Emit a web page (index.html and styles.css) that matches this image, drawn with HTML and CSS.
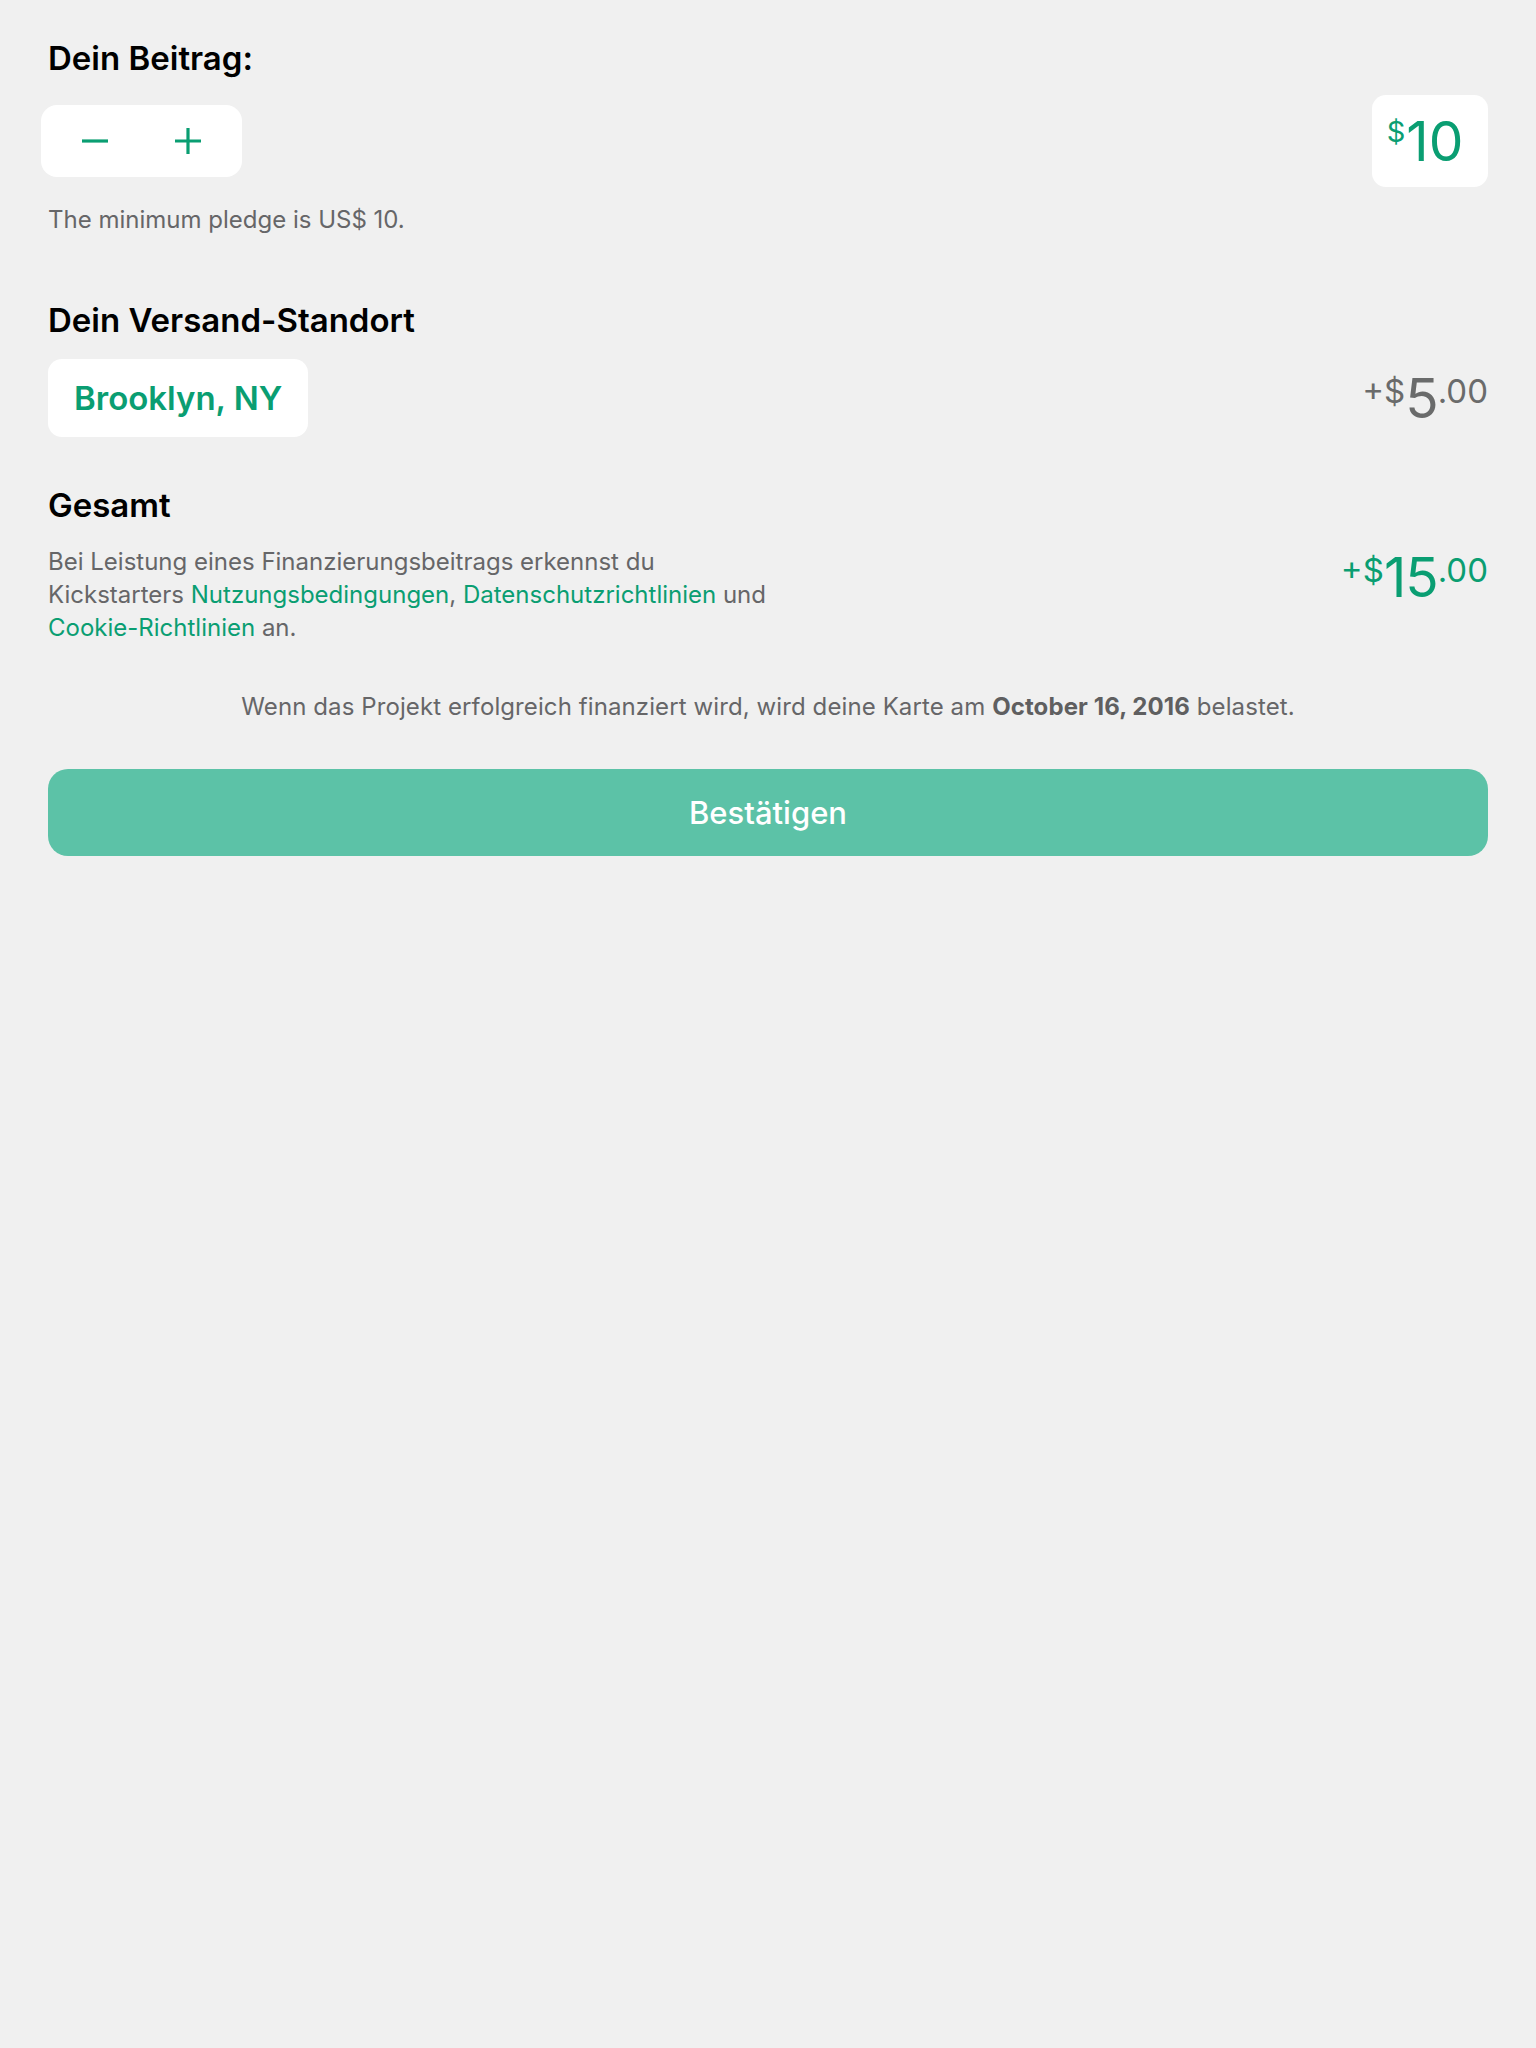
FILE: index.html
```html
<!DOCTYPE html>
<html lang="de">
<head>
<meta charset="utf-8">
<title>Pledge</title>
<link rel="stylesheet" href="styles.css">
</head>
<body>
<main class="page">
  <section class="section section-pledge">
    <h2 class="heading">Dein Beitrag:</h2>
    <div class="row row-pledge">
      <div class="stepper">
        <button class="step-btn" aria-label="minus">
          <svg width="28" height="28" viewBox="0 0 28 28"><path d="M1 14H27" stroke="#0a9e72" stroke-width="3.2"/></svg>
        </button>
        <button class="step-btn" aria-label="plus">
          <svg width="28" height="28" viewBox="0 0 28 28"><path d="M1 14H27M14 1V27" stroke="#0a9e72" stroke-width="3.2"/></svg>
        </button>
      </div>
      <div class="amount-box"><span class="amt-cur">$</span><span class="amt-big">10</span></div>
    </div>
    <p class="note-min">The minimum pledge is US$ 10.</p>
  </section>

  <section class="section section-ship">
    <h2 class="heading">Dein Versand-Standort</h2>
    <div class="row row-ship">
      <button class="location">Brooklyn, NY</button>
      <div class="price price-gray"><span class="p-small">+$</span><span class="p-big">5</span><span class="p-small">.00</span></div>
    </div>
  </section>

  <section class="section section-total">
    <h2 class="heading">Gesamt</h2>
    <div class="row row-total">
      <p class="terms">Bei Leistung eines Finanzierungsbeitrags erkennst du Kickstarters <a class="link" href="#">Nutzungsbedingungen</a>, <a class="link" href="#">Datenschutzrichtlinien</a> und <a class="link nowrap" href="#">Cookie-Richtlinien</a> an.</p>
      <div class="price price-green"><span class="p-small">+$</span><span class="p-big">15</span><span class="p-small">.00</span></div>
    </div>
  </section>

  <p class="charge-note">Wenn das Projekt erfolgreich finanziert wird, wird deine Karte am <strong>October 16, 2016</strong> belastet.</p>

  <button class="confirm">Bestätigen</button>
</main>
</body>
</html>
```

FILE: styles.css
```css
* { box-sizing: border-box; }
html, body {
  margin: 0;
  background: #f0f0f0;
}
body {
  font-family: Inter, "Noto Sans", "Liberation Sans", sans-serif;
  color: #000;
}
.page {
  padding: 38px 48px 0 48px;
  display: flex;
  flex-direction: column;
}
.heading {
  margin: 0;
  font-size: 33px;
  line-height: 40px;
  font-weight: 600;
  color: #000;
}
.row {
  display: flex;
  justify-content: space-between;
}
.row-pledge {
  margin-top: 17px;
  align-items: center;
}
.stepper {
  margin-left: -7px;
  width: 201px;
  height: 72px;
  background: #fff;
  border-radius: 16px;
  display: flex;
  align-items: center;
  justify-content: space-between;
  padding: 0 40px;
}
.step-btn {
  border: 0;
  background: none;
  padding: 0;
  width: 28px;
  height: 28px;
  display: flex;
}
.amount-box {
  width: 116px;
  height: 92px;
  background: #fff;
  border-radius: 14px;
  color: #0a9e72;
  display: flex;
  align-items: center;
  justify-content: center;
  padding-right: 10px;
  line-height: 1;
}
.amt-cur {
  font-size: 29px;
  align-self: flex-start;
  margin-top: 22px;
  margin-right: 1px;
}
.amt-big {
  font-size: 55px;
}
.note-min {
  margin: 18px 0 0 0;
  font-size: 24px;
  line-height: 30px;
  color: #666668;
}
.section-ship { margin-top: 65px; }
.row-ship {
  margin-top: 19px;
  align-items: center;
}
.location {
  height: 78px;
  padding: 0 26px;
  border: 0;
  border-radius: 14px;
  background: #fff;
  color: #0a9e72;
  font-family: inherit;
  font-size: 33px;
  font-weight: 600;
}
.price {
  line-height: 1;
  white-space: nowrap;
}
.p-big {
  font-size: 55px;
  letter-spacing: -1px;
}
.p-small {
  font-size: 33px;
  vertical-align: 15px;
}
.price-gray { color: #6a6b6b; }
.price-green { color: #0a9e72; margin-top: 5px; }
.section-total { margin-top: 48px; }
.row-total {
  margin-top: 20px;
  align-items: flex-start;
}
.terms {
  margin: 0;
  max-width: 732px;
  font-size: 24px;
  line-height: 33px;
  color: #666668;
}
.link {
  color: #0a9e72;
  text-decoration: none;
}
.nowrap { white-space: nowrap; }
.charge-note {
  margin: 46px 0 0 0;
  text-align: center;
  font-size: 24px;
  line-height: 33px;
  letter-spacing: 0.1px;
  color: #666668;
}
.charge-note strong { font-weight: 700; color: #5f5f60; }
.confirm {
  margin-top: 46px;
  height: 87px;
  border: 0;
  border-radius: 20px;
  background: #5cc2a7;
  color: #fff;
  font-family: inherit;
  font-size: 31px;
  font-weight: 500;
}
```
